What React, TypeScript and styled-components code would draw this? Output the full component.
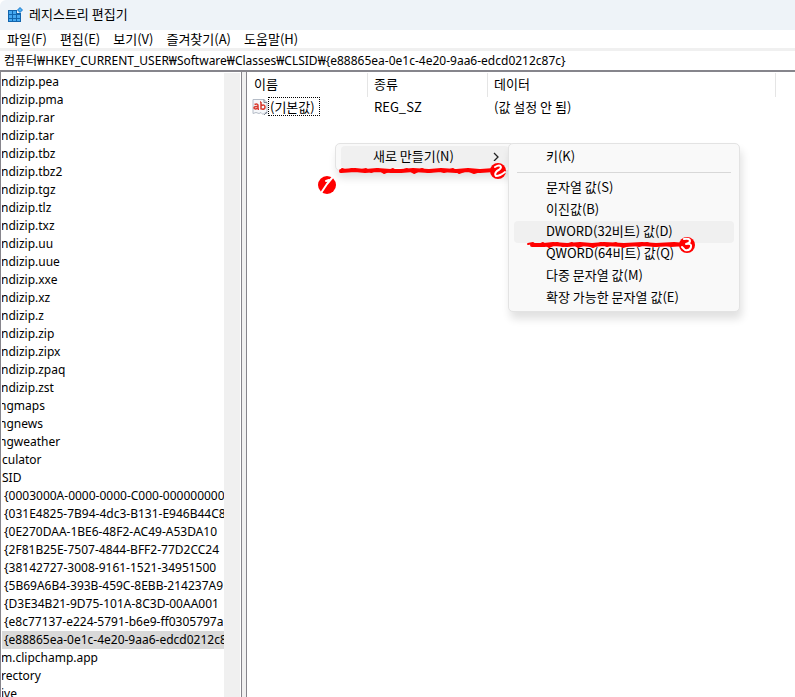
import React from "react";
import styled, { createGlobalStyle } from "styled-components";

const GlobalStyle = createGlobalStyle`
  * { box-sizing: border-box; }
  body {
    margin: 0;
    background: #ffffff;
    color: #000000;
    font-family: "Noto Sans CJK KR", sans-serif;
    font-size: 13px;
    line-height: 18px;
    overflow: hidden;
  }
  button, input {
    font: inherit;
    color: inherit;
    border: 0;
    padding: 0;
    background: none;
    text-align: left;
  }
`;

const Window = styled.div`
  display: flex;
  flex-direction: column;
  height: 100vh;
  overflow: hidden;
`;

const TitleBar = styled.header`
  display: flex;
  align-items: center;
  gap: 6px;
  height: 30px;
  flex: none;
  padding-left: 7px;
  background: #eef3f8;
  border-top-left-radius: 6px;
`;

const Title = styled.h1`
  margin: 0;
  padding-bottom: 2px;
  font-size: 13px;
  font-weight: 400;
`;

const MenuBar = styled.nav`
  display: flex;
  gap: 13px;
  height: 21px;
  flex: none;
  padding-left: 7px;
  border-bottom: 3px solid #f0f0f0;
`;

const MenuBarButton = styled.button`
  padding-bottom: 2px;
  white-space: nowrap;
`;

const AddressInput = styled.input`
  height: 19px;
  flex: none;
  width: 100%;
  padding: 0 4px 2px;
  outline: none;
  font-family: "Noto Sans", "Noto Sans CJK KR", sans-serif;
  font-size: 12px;
`;

const Body = styled.main`
  display: flex;
  flex: 1;
  min-height: 0;
  border-top: 2px solid #86858c;
  background: #f0f0f0;
`;

const TreePane = styled.section`
  display: flex;
  width: 242px;
  flex: none;
  border-left: 1px solid #86858c;
  border-right: 1px solid #86858c;
  background: #ffffff;
`;

const Tree = styled.ul`
  flex: 1;
  min-width: 0;
  margin: 0;
  padding: 1px 0 0 1px;
  list-style: none;
  overflow: hidden;
  font-family: "Noto Sans", sans-serif;
  font-size: 12px;
`;

const TreeItem = styled.li<{ $selected?: boolean }>`
  height: 18px;
  overflow: hidden;
  background: ${(p) => (p.$selected ? "#d9d9d9" : "transparent")};
`;

const TreeButton = styled.button<{ $indent: number }>`
  display: block;
  margin-left: ${(p) => p.$indent}px;
  white-space: nowrap;
`;

const ScrollTrack = styled.div`
  width: 17px;
  flex: none;
  margin-top: 1px;
  background: #f0f0f0;
  border-right: 1px solid #ffffff;
`;

const ValuesPane = styled.section`
  position: relative;
  flex: 1;
  min-width: 0;
  margin-left: 4px;
  border-left: 1px solid #86858c;
  background: #ffffff;
`;

const ValuesTable = styled.table`
  width: 100%;
  table-layout: fixed;
  border-collapse: separate;
  border-spacing: 0;
  margin-top: 1px;

  th, td {
    height: 24px;
    padding: 0 6px 2px;
    font-weight: 400;
    text-align: left;
    white-space: nowrap;
  }
  th:first-child { padding-left: 7px; }
  th:not(:last-child) { border-right: 1px solid #e5e5e5; }
  td { height: 20px; }
  td:first-child { padding: 0 0 2px 5px; }
`;

const Column = styled.col<{ $width?: number }>`
  width: ${(p) => (p.$width ? `${p.$width}px` : "auto")};
`;

const ValueName = styled.div`
  display: flex;
  align-items: center;
`;

const FocusedName = styled.button`
  height: 19px;
  padding: 0 4px 0 1px;
  border: 1px dotted #000000;
  line-height: 17px;
`;

const Popup = styled.div`
  position: absolute;
  padding: 2px 5px;
  border: 1px solid #e3e3e3;
  border-radius: 5px;
  background: #f9f9f9;
  box-shadow: 2px 7px 9px rgba(0, 0, 0, 0.12);
`;

const ContextMenu = styled(Popup)`
  left: 88px;
  top: 71px;
  width: 180px;
`;

const SubMenu = styled(Popup)`
  left: 261px;
  top: 71px;
  width: 232px;
`;

const MenuItem = styled.button<{ $active?: boolean }>`
  display: flex;
  align-items: center;
  justify-content: space-between;
  width: 100%;
  height: 22px;
  padding: 0 10px 2px 32px;
  border-radius: 4px;
  background: ${(p) => (p.$active ? "#f0f0f0" : "transparent")};
  white-space: nowrap;
`;

const Separator = styled.hr`
  height: 1px;
  margin: 4px 3px;
  border: 0;
  background: #d8d8d8;
`;

const Annotations = styled.svg`
  position: absolute;
  left: 63px;
  top: 91px;
  pointer-events: none;
`;

function RegistryIcon() {
  return (
    <svg width="16" height="16" viewBox="0 0 16 16" aria-hidden="true">
      <path d="M1 3h9v3h4v9H1z" fill="#1265ad" />
      <path
        d="M2 4h3v3H2zM6 4h3v3H6zM2 8h3v3H2zM6 8h3v3H6zM10 8h3v3h-3zM2 12h3v2H2zM6 12h3v2H6zM10 12h3v2h-3z"
        fill="#45a8f0"
      />
      <path d="M13 0l3 3-3 3-3-3z" fill="#1a79cb" />
      <path d="M13 1l2 2-2 2-2-2z" fill="#52b2f2" />
    </svg>
  );
}

function StringValueIcon() {
  return (
    <svg width="16" height="16" viewBox="0 0 16 16" aria-hidden="true">
      <path
        d="M1 .5h11l3 3v11l-2-1-2 2-2-2-2 1-3-1-3 1z"
        fill="#f5f7fa"
        stroke="#b5bcc7"
      />
      <path d="M12 .5v3h3M15 13l-3 3" fill="none" stroke="#7e8794" />
      <path
        d="M2.500 5.500q3.500-1.200 3.500 1V10.500M6 7.500q-4-.3-4 1.300 0 2 4 .3M9 3v7.500M9 6.500q4-1.500 4 1.500 0 3-4 1.800M8 3h1M6 10.300h1"
        fill="none"
        stroke="#d83a2e"
        strokeWidth="1.500"
      />
    </svg>
  );
}

function Chevron() {
  return (
    <svg width="6" height="10" viewBox="0 0 6 10" aria-hidden="true">
      <path d="M1 2l4 4-4 4" fill="none" stroke="#222222" strokeWidth="1.300" />
    </svg>
  );
}

function Marks() {
  return (
    <Annotations width="400" height="100" viewBox="310 163 400 100" aria-hidden="true">
      <g fill="none" stroke="#ff0000" strokeLinecap="round" strokeLinejoin="round">
        <path
          d="M341 171l14-1 10 1 12-1 14 1 10 0 12-1 16 1 12-1 15 1 12-1 12 1 14-1"
          strokeWidth="4"
        />
        <path
          d="M342 169l5 2 5-2 6 2 8-2 5 3 7-3 6 4 9-4 5 3 9-3 7 4 8-4 6 3 10-2 6 2 9-3 6 4 8-3 7 3 10-3"
          strokeWidth="2"
        />
        <path d="M532 245l12 0 9-1 14 1 13-1 12 1 12-1 20 1 18-1 14 1 18-1 12 1" strokeWidth="4" />
        <path
          d="M528 244l5-1 4 3 6-3 6 4 8-4 6 3 9-3 6 4 8-3 7 3 8-4 6 3 9-3 7 4 9-3 7 2 8-3 7 3 8-2 9 2 10-1"
          strokeWidth="2"
        />
      </g>
      <g fill="#ff0000">
        <circle cx="327" cy="185" r="9" />
        <circle cx="498" cy="171" r="8" />
        <circle cx="687" cy="245" r="8" />
      </g>
      <g fill="none" stroke="#ffffff" strokeLinecap="round" strokeLinejoin="round">
        <path d="M332 178l-5 6-6 9M326 181l3-1" strokeWidth="2" />
        <path d="M495 167q5-3 6 0 0 2-4 4-3 3-1 5 4 0 9-4" strokeWidth="2" />
        <path d="M684 239q6-1 6 2 0 2-4 3 6-1 5 3-1 4-6 3M682 247l2 2" strokeWidth="2" />
      </g>
    </Annotations>
  );
}

const menus = ["파일(F)", "편집(E)", "보기(V)", "즐겨찾기(A)", "도움말(H)"];

type Node = { name: string; indent?: number; selected?: boolean };

const nodes: Node[] = [
  ..."pea pma rar tar tbz tbz2 tgz tlz txz uu uue xxe xz z zip zipx zpaq zst"
    .split(" ")
    .map((ext) => ({ name: `ndizip.${ext}`, indent: -1 })),
  { name: "ngmaps", indent: -3 },
  { name: "ngnews", indent: -3 },
  { name: "ngweather", indent: -3 },
  { name: "culator" },
  { name: "SID" },
  { name: "{0003000A-0000-0000-C000-000000000", indent: 2 },
  { name: "{031E4825-7B94-4dc3-B131-E946B44C8", indent: 2 },
  { name: "{0E270DAA-1BE6-48F2-AC49-A53DA10", indent: 2 },
  { name: "{2F81B25E-7507-4844-BFF2-77D2CC24", indent: 2 },
  { name: "{38142727-3008-9161-1521-34951500", indent: 2 },
  { name: "{5B69A6B4-393B-459C-8EBB-214237A9", indent: 2 },
  { name: "{D3E34B21-9D75-101A-8C3D-00AA001", indent: 2 },
  { name: "{e8c77137-e224-5791-b6e9-ff0305797a", indent: 2 },
  { name: "{e88865ea-0e1c-4e20-9aa6-edcd0212c8", indent: 2, selected: true },
  { name: "m.clipchamp.app", indent: -1 },
  { name: "rectory", indent: -1 },
  { name: "ive", indent: -1 },
];

const valueTypes = [
  "문자열 값(S)",
  "이진값(B)",
  "DWORD(32비트) 값(D)",
  "QWORD(64비트) 값(Q)",
  "다중 문자열 값(M)",
  "확장 가능한 문자열 값(E)",
];

export default function App() {
  return (
    <Window>
      <GlobalStyle />
      <TitleBar>
        <RegistryIcon />
        <Title>레지스트리 편집기</Title>
      </TitleBar>
      <MenuBar>
        {menus.map((m) => (
          <MenuBarButton key={m}>{m}</MenuBarButton>
        ))}
      </MenuBar>
      <AddressInput
        aria-label="주소"
        defaultValue="컴퓨터₩HKEY_CURRENT_USER₩Software₩Classes₩CLSID₩{e88865ea-0e1c-4e20-9aa6-edcd0212c87c}"
      />
      <Body>
        <TreePane>
          <Tree>
            {nodes.map((n) => (
              <TreeItem key={n.name} $selected={n.selected}>
                <TreeButton $indent={n.indent ?? 0}>{n.name}</TreeButton>
              </TreeItem>
            ))}
          </Tree>
          <ScrollTrack />
        </TreePane>
        <ValuesPane>
          <ValuesTable>
            <colgroup>
              <Column $width={121} />
              <Column $width={120} />
              <Column $width={288} />
              <Column />
            </colgroup>
            <thead>
              <tr>
                <th>이름</th>
                <th>종류</th>
                <th>데이터</th>
                <th />
              </tr>
            </thead>
            <tbody>
              <tr>
                <td>
                  <ValueName>
                    <StringValueIcon />
                    <FocusedName>(기본값)</FocusedName>
                  </ValueName>
                </td>
                <td>REG_SZ</td>
                <td>(값 설정 안 됨)</td>
                <td />
              </tr>
            </tbody>
          </ValuesTable>
          <ContextMenu role="menu">
            <MenuItem role="menuitem" $active>
              새로 만들기(N)
              <Chevron />
            </MenuItem>
          </ContextMenu>
          <SubMenu role="menu">
            <MenuItem role="menuitem">키(K)</MenuItem>
            <Separator />
            {valueTypes.map((v, i) => (
              <MenuItem role="menuitem" key={v} $active={i === 2}>
                {v}
              </MenuItem>
            ))}
          </SubMenu>
          <Marks />
        </ValuesPane>
      </Body>
    </Window>
  );
}
